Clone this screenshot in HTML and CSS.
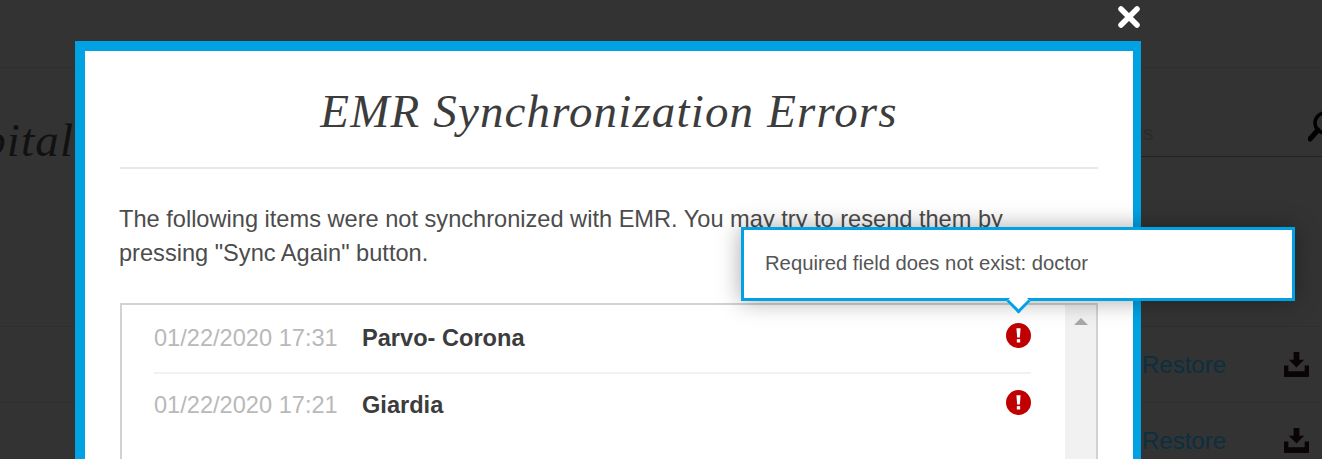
FILE: index.html
```html
<!DOCTYPE html>
<html lang="en">
<head>
    <meta charset="UTF-8">
    <meta name="viewport" content="width=device-width, initial-scale=1.0">
    <title>EMR Synchronization Errors</title>
    <link rel="stylesheet" href="styles.css">
</head>
<body>
    <!-- page behind the overlay -->
    <div class="page">
        <div class="page-top"></div>
        <div class="page-head">
            <h2 class="page-title">Hospital</h2>
            <div class="search">
                <span class="search-text">Search records</span>
                <svg class="search-icon" viewBox="0 0 32 32" aria-hidden="true">
                    <circle cx="17" cy="13" r="10" fill="none" stroke="#000" stroke-width="3.5"/>
                    <path d="M10 20 L2 29" stroke="#000" stroke-width="5" stroke-linecap="round"/>
                </svg>
            </div>
        </div>
        <div class="page-row page-row-blank"></div>
        <div class="page-row">
            <a class="restore">Restore</a>
            <svg class="download" viewBox="0 0 28 26" aria-hidden="true">
                <path d="M11 0 H17 V8 H22 L14 16 L6 8 H11 Z"/>
                <path d="M1 14 H5.500 V20 H22.500 V14 H27 V25 Q27 26 26 26 H2 Q1 26 1 25 Z"/>
            </svg>
        </div>
        <div class="page-row">
            <a class="restore">Restore</a>
            <svg class="download" viewBox="0 0 28 26" aria-hidden="true">
                <path d="M11 0 H17 V8 H22 L14 16 L6 8 H11 Z"/>
                <path d="M1 14 H5.500 V20 H22.500 V14 H27 V25 Q27 26 26 26 H2 Q1 26 1 25 Z"/>
            </svg>
        </div>
    </div>

    <button class="close" aria-label="Close">
        <svg viewBox="0 0 24 24" aria-hidden="true">
            <path d="M4 4 L20 20 M20 4 L4 20" stroke="#fff" stroke-width="5.500" stroke-linecap="round"/>
        </svg>
    </button>

    <div class="modal">
        <h1 class="modal-title">EMR Synchronization Errors</h1>
        <p class="modal-text">The following items were not synchronized with EMR. You may try to resend them by<br>pressing "Sync Again" button.</p>

        <div class="error-box">
            <ul class="error-list">
                <li class="error-item">
                    <span class="error-date">01/22/2020 17:31</span>
                    <span class="error-name">Parvo- Corona</span>
                    <svg class="error-icon" viewBox="0 0 24 24" aria-hidden="true">
                        <circle cx="12" cy="12" r="12" fill="#c00000"/>
                        <path d="M10 5 H14 L13.300 14 H10.700 Z" fill="#fff"/>
                        <rect x="10.400" y="15.500" width="3.200" height="3.200" fill="#fff"/>
                    </svg>
                </li>
                <li class="error-item">
                    <span class="error-date">01/22/2020 17:21</span>
                    <span class="error-name">Giardia</span>
                    <svg class="error-icon" viewBox="0 0 24 24" aria-hidden="true">
                        <circle cx="12" cy="12" r="12" fill="#c00000"/>
                        <path d="M10 5 H14 L13.300 14 H10.700 Z" fill="#fff"/>
                        <rect x="10.400" y="15.500" width="3.200" height="3.200" fill="#fff"/>
                    </svg>
                </li>
            </ul>
            <div class="scrollbar">
                <span class="scroll-up"></span>
            </div>
        </div>
    </div>

    <div class="tooltip">
        Required field does not exist: doctor
        <span class="tooltip-arrow"></span>
    </div>
</body>
</html>
```

FILE: styles.css
```css
* {
    margin: 0;
    padding: 0;
    box-sizing: border-box;
}

html, body {
    height: 459px;
    overflow: hidden;
}

body {
    background-color: #333;
    font-family: "Liberation Sans", Arial, sans-serif;
    color: #444;
}

/* background page */
.page {
    height: 459px;
    overflow: hidden;
}

.page-top {
    height: 68px;
    border-bottom: 1px solid #2f2f2f;
}

.page-head {
    height: 89px;
    display: flex;
    justify-content: space-between;
    align-items: flex-end;
}

.page-title {
    font-family: "Liberation Serif", serif;
    font-style: italic;
    font-weight: normal;
    font-size: 47px;
    letter-spacing: 1.15px;
    color: #111;
    margin-left: -97px;
    margin-bottom: -10px;
    white-space: nowrap;
}

.search {
    width: 188px;
    height: 48px;
    display: flex;
    justify-content: space-between;
    align-items: center;
    border-bottom: 1px solid #222;
    overflow: hidden;
}

.search-text {
    font-size: 21px;
    color: #2b2b2b;
    margin-left: -123px;
    white-space: nowrap;
}

.search-icon {
    flex: none;
    width: 32px;
    height: 32px;
    margin-top: -13px;
    margin-right: -18px;
}

.page-row {
    height: 76px;
    display: flex;
    justify-content: flex-end;
    align-items: center;
    gap: 57px;
    padding-right: 12px;
    border-bottom: 1px solid #2f2f2f;
}

.page-row-blank {
    height: 170px;
}

.restore {
    font-size: 24px;
    color: #0b2f40;
}

.download {
    width: 27px;
    height: 25px;
    fill: #0a0308;
}

/* overlay */
.close {
    position: absolute;
    left: 1117px;
    top: 5px;
    width: 24px;
    height: 24px;
    background: none;
    border: none;
}

.modal {
    position: absolute;
    left: 75px;
    top: 41px;
    width: 1066px;
    height: 500px;
    background: #fff;
    border-style: solid;
    border-color: #00a2e3;
    border-width: 10px 8px 10px 10px;
    padding: 0 35px;
}

.modal-title {
    height: 118px;
    border-bottom: 2px solid #e8e8e8;
    padding-top: 30px;
    text-align: center;
    font-family: "Liberation Serif", serif;
    font-style: italic;
    font-weight: normal;
    font-size: 47px;
    letter-spacing: 1.15px;
    line-height: 60px;
    color: #3c3c3c;
}

.modal-text {
    margin: 33px 0 0 -1px;
    font-size: 23.6px;
    line-height: 34px;
    color: #4c4c4c;
    white-space: nowrap;
}

.error-box {
    margin-top: 33px;
    display: flex;
    height: 300px;
    border: 2px solid #d2d2d2;
}

.error-list {
    flex: 1;
    list-style: none;
    padding: 2px 34px 0 32px;
}

.error-item {
    display: flex;
    align-items: center;
    padding: 15px 0 18px;
    line-height: 32px;
    border-bottom: 2px solid #f1f1f1;
    font-size: 23.6px;
}

.error-item:last-child {
    border-bottom: none;
}

.error-date {
    color: #b9b9b9;
    width: 208px;
}

.error-name {
    flex: 1;
    font-weight: bold;
    color: #3c3c3c;
}

.error-icon {
    width: 25px;
    height: 25px;
    margin-bottom: 6px;
}

.scrollbar {
    width: 31px;
    background: #f1f1f1;
    display: flex;
    justify-content: center;
}

.scroll-up {
    margin-top: 13px;
    width: 0;
    height: 0;
    border-left: 7px solid transparent;
    border-right: 7px solid transparent;
    border-bottom: 7px solid #a8a8a8;
}

.tooltip {
    position: absolute;
    left: 741px;
    top: 227px;
    width: 554px;
    height: 74px;
    background: #fff;
    border: 3px solid #00a2e3;
    padding: 0 0 2px 21px;
    display: flex;
    align-items: center;
    font-size: 20.25px;
    color: #555;
    box-shadow: 0 0 22px rgba(0, 0, 0, 0.35);
}

.tooltip-arrow {
    position: absolute;
    left: 265.5px;
    bottom: -11.5px;
    width: 17px;
    height: 17px;
    background: #fff;
    border-right: 3px solid #00a2e3;
    border-bottom: 3px solid #00a2e3;
    transform: rotate(45deg);
}
```
